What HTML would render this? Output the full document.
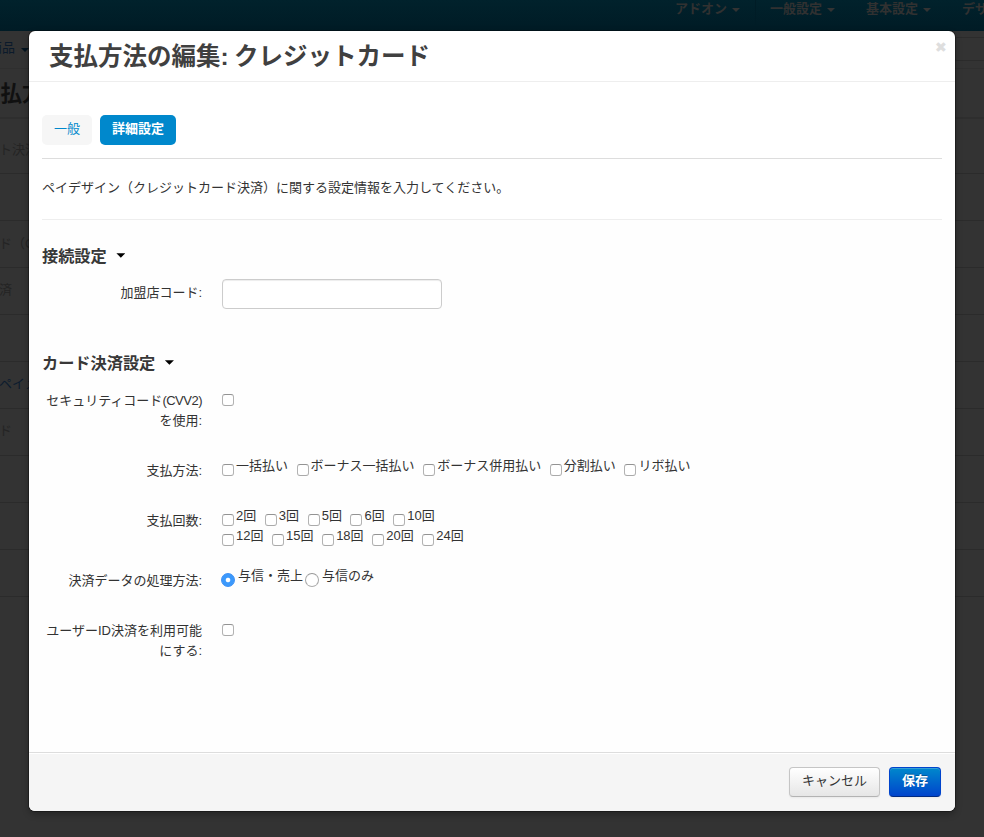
<!DOCTYPE html>
<html lang="ja">
<head>
<meta charset="utf-8">
<title>支払方法の編集: クレジットカード</title>
<style>
*{box-sizing:border-box;}
html,body{margin:0;padding:0;}
body{width:984px;height:837px;overflow:hidden;position:relative;background:#333;
  font-family:"Liberation Sans","Noto Sans CJK JP",sans-serif;font-size:13px;line-height:20px;color:#333;}
/* ---------- dimmed page behind ---------- */
#bg{position:absolute;left:0;top:0;width:984px;height:837px;overflow:hidden;}
#bg .topbar{position:absolute;left:0;top:0;width:984px;height:31px;background:linear-gradient(#01222c,#001b25);}
#bg .vs{position:absolute;top:0;width:1px;height:31px;background:#001c26;}
#bg .menu{position:absolute;top:-1px;height:20px;line-height:20px;font-size:13px;font-weight:bold;color:#313131;white-space:nowrap;}
#bg .caret{display:inline-block;width:0;height:0;border-left:4px solid transparent;border-right:4px solid transparent;border-top:4px solid #333;vertical-align:middle;margin-left:5px;position:relative;top:0px;}
#bg .ln{position:absolute;left:0;width:984px;height:1px;background:#2b2b2b;}
#bg .t{position:absolute;white-space:nowrap;color:#242424;}
#bg .box{position:absolute;left:953px;top:37px;width:60px;height:24px;border:1px solid #2b2b2b;border-radius:4px;}
/* ---------- modal ---------- */
#modal{position:absolute;left:29px;top:31px;width:926px;height:780px;background:#fff;border-radius:6px;
  box-shadow:0 0 0 1px rgba(0,0,0,.3),0 3px 7px rgba(0,0,0,.3);}
#modal .hd{position:absolute;left:0;top:0;width:926px;height:51px;border-bottom:1px solid #eee;}
#modal h3{position:absolute;left:20px;top:11px;margin:0;word-spacing:-1.5px;font-size:24.5px;line-height:30px;font-weight:bold;color:#404040;white-space:nowrap;}
#modal .close{position:absolute;left:902px;top:6px;width:20px;text-align:center;font-size:15px;line-height:20px;font-weight:bold;color:#dedede;-webkit-text-stroke:1.5px #dedede;}
#modal .ft{position:absolute;left:0;top:721px;width:926px;height:59px;background:#f5f5f5;border-top:1px solid #ddd;border-radius:0 0 6px 6px;box-shadow:inset 0 1px 0 #fff;}
.btn{display:block;text-decoration:none;position:absolute;top:14px;height:30px;line-height:26px;font-size:13px;text-align:center;border-radius:4px;white-space:nowrap;}
.btn-default{left:760px;width:91px;color:#333;border:1px solid #c5c5c5;border-bottom-color:#b3b3b3;background:linear-gradient(#fff,#e6e6e6);box-shadow:inset 0 1px 0 rgba(255,255,255,.2),0 1px 2px rgba(0,0,0,.05);}
.btn-primary{left:860px;width:52px;color:#fff;font-weight:bold;border:1px solid #0044cc;border-color:#04c #04c #002a80;background:linear-gradient(#08c,#04c);text-shadow:0 -1px 0 rgba(0,0,0,.25);box-shadow:inset 0 1px 0 rgba(255,255,255,.2),0 1px 2px rgba(0,0,0,.05);}
/* tabs */
.pill{display:block;text-decoration:none;position:absolute;top:84px;height:30px;line-height:28px;border-radius:5px;text-align:center;font-size:13px;}
.pill.a{left:13px;width:50px;background:#f6f6f6;color:#08c;}
.pill.b{left:71px;width:76px;background:#08c;color:#fff;font-weight:bold;}
.hr{position:absolute;left:13px;width:900px;height:1px;}
.p{position:absolute;left:13px;top:147px;white-space:nowrap;}
h4{position:absolute;left:13px;margin:0;font-size:16.2px;line-height:20px;font-weight:bold;color:#383838;white-space:nowrap;}
h4 i{display:inline-block;width:9px;height:4.6px;background:#000;clip-path:polygon(0 0,100% 0,50% 100%);vertical-align:middle;margin-left:9.6px;position:relative;top:-2.3px;}
.lbl{position:absolute;left:13px;width:160px;text-align:right;}
.ctl{position:absolute;left:193px;white-space:nowrap;}
.txt{-webkit-appearance:none;appearance:none;margin:0;padding:4px 6px;outline:0;font:inherit;position:absolute;left:193px;top:248px;width:220px;height:30px;border:1px solid #ccc;border-radius:4px;background:#fff;box-shadow:inset 0 1px 1px rgba(0,0,0,.075);}
.cb{-webkit-appearance:none;appearance:none;padding:0;outline:0;display:inline-block;width:12px;height:12px;border:1px solid #adadad;border-color:#939393 #b3b3b3 #aaa;border-radius:3px;background:#fff;vertical-align:middle;margin:0 2px 0 0;position:relative;top:3px;}
.rd{-webkit-appearance:none;appearance:none;padding:0;outline:0;display:inline-block;width:14px;height:14px;border:1px solid #a4a4a4;border-color:#989898 #a6a6a6 #acacac;border-radius:50%;background:#fff;vertical-align:middle;margin:0 3px 0 -1px;position:relative;top:3px;}
.rd.on{border-color:#3b8ff5;background:radial-gradient(circle at 50% 50%,#fff 0,#fff 1.9px,#3b99fc 2.7px,#3b99fc 100%);}
.sp{display:inline-block;width:8.6px;}
.la{letter-spacing:-0.5px;}
</style>
</head>
<body>
<div id="bg">
  <div class="topbar"></div>
  <div class="menu" style="left:675px;">アドオン<span class="caret"></span></div>
  <div class="menu" style="left:770px;">一般設定<span class="caret"></span></div>
  <div class="menu" style="left:866px;">基本設定<span class="caret"></span></div>
  <div class="menu" style="left:962px;">デザイン</div>
  <div class="vs" style="left:755px;"></div>
  <div class="ln" style="top:68px;background:#2f2f2f;"></div>
  <div class="ln" style="top:117px;height:2px;background:#2e2e2e;"></div>
  <div class="ln" style="top:173px;"></div>
  <div class="ln" style="top:220px;"></div>
  <div class="ln" style="top:267px;"></div>
  <div class="ln" style="top:314px;"></div>
  <div class="ln" style="top:361px;"></div>
  <div class="ln" style="top:408px;"></div>
  <div class="ln" style="top:455px;"></div>
  <div class="ln" style="top:502px;"></div>
  <div class="ln" style="top:549px;"></div>
  <div class="ln" style="top:596px;"></div>
  <div class="t" style="left:-11px;top:38px;color:#0b1a2b;">商品<span class="caret" style="border-top-color:#03131f;margin-left:6px;top:1px;"></span></div>
  <div class="t" style="left:-21px;top:79px;font-size:21.5px;line-height:30px;font-weight:bold;color:#101010;">支払方法</div>
  <div class="t" style="left:-53px;top:140px;">クレジット決済</div>
  <div class="t" style="left:-92px;top:234px;">クレジットカード（C</div>
  <div class="t" style="left:-14px;top:280px;">決済</div>
  <div class="t" style="left:-1px;top:374px;color:#0b1b2e;">ペイメント</div>
  <div class="t" style="left:-92px;top:421px;">クレジットカード</div>
  <div class="box"></div>
</div>

<div id="modal">
  <div class="hd">
    <h3>支払方法の編集: クレジットカード</h3>
    <span class="close">×</span>
  </div>
  <a class="pill a">一般</a>
  <a class="pill b">詳細設定</a>
  <div class="hr" style="top:127px;background:#ddd;"></div>
  <div class="p">ペイデザイン（クレジットカード決済）に関する設定情報を入力してください。</div>
  <div style="position:absolute;left:0;top:189px;width:926px;height:532px;background:#fefefe;"></div>
  <div class="hr" style="top:188px;background:#eee;"></div>

  <h4 style="top:215px;">接続設定<i></i></h4>
  <div class="lbl" style="top:252px;">加盟店コード:</div>
  <input type="text" class="txt" value="">

  <h4 style="top:322px;">カード決済設定<i></i></h4>
  <div class="lbl" style="top:360px;">セキュリティコード<span class="la">(CVV2)</span>を使用:</div>
  <div class="ctl" style="top:355px;"><input type="checkbox" class="cb"></div>

  <div class="lbl" style="top:430px;">支払方法:</div>
  <div class="ctl" style="top:425px;"><input type="checkbox" class="cb">一括払い<span class="sp"></span><input type="checkbox" class="cb">ボーナス一括払い<span class="sp"></span><input type="checkbox" class="cb">ボーナス併用払い<span class="sp"></span><input type="checkbox" class="cb">分割払い<span class="sp"></span><input type="checkbox" class="cb">リボ払い</div>

  <div class="lbl" style="top:480px;">支払回数:</div>
  <div class="ctl" style="top:475px;"><input type="checkbox" class="cb">2回<span class="sp"></span><input type="checkbox" class="cb">3回<span class="sp"></span><input type="checkbox" class="cb">5回<span class="sp"></span><input type="checkbox" class="cb">6回<span class="sp"></span><input type="checkbox" class="cb">10回</div>
  <div class="ctl" style="top:495px;"><input type="checkbox" class="cb">12回<span class="sp"></span><input type="checkbox" class="cb">15回<span class="sp"></span><input type="checkbox" class="cb">18回<span class="sp"></span><input type="checkbox" class="cb">20回<span class="sp"></span><input type="checkbox" class="cb">24回</div>

  <div class="lbl" style="top:540px;">決済データの処理方法:</div>
  <div class="ctl" style="top:535px;"><input type="radio" name="proc" class="rd on" checked>与信・売上<input type="radio" name="proc" class="rd" style="margin-left:2px;">与信のみ</div>

  <div class="lbl" style="top:590px;">ユーザーID決済を利用可能にする:</div>
  <div class="ctl" style="top:585px;"><input type="checkbox" class="cb"></div>

  <div class="ft">
    <a class="btn btn-default">キャンセル</a>
    <a class="btn btn-primary">保存</a>
  </div>
</div>
</body>
</html>
